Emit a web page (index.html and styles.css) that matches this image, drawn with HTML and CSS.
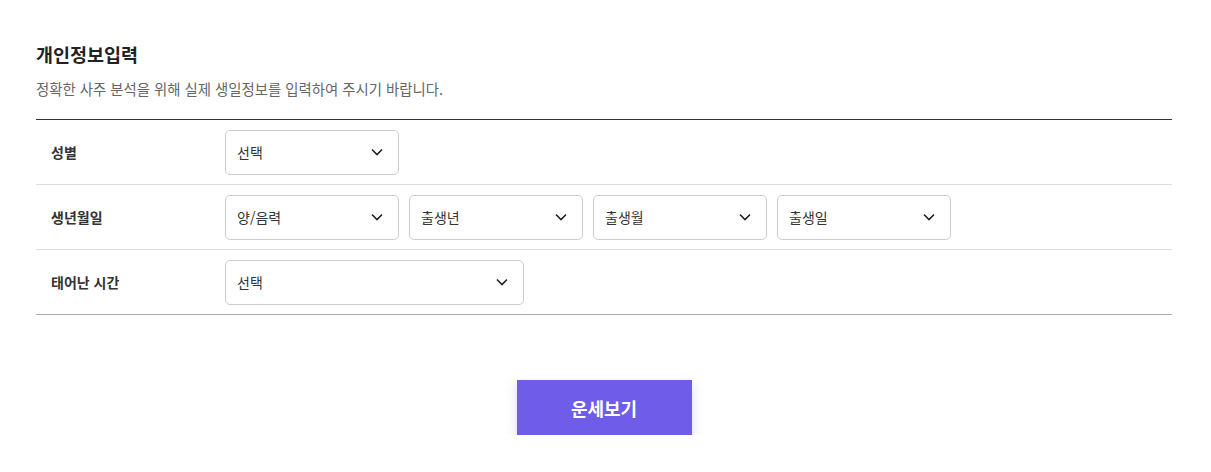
FILE: index.html
```html
<!DOCTYPE html>
<html lang="ko">
<head>
<meta charset="utf-8">
<link rel="stylesheet" href="styles.css">
</head>
<body>
<div class="wrap">
  <h2 class="title">개인정보입력</h2>
  <p class="desc">정확한 사주 분석을 위해 실제 생일정보를 입력하여 주시기 바랍니다.</p>
  <div class="form">
    <div class="row">
      <div class="label">성별</div>
      <div class="fields">
        <div class="select"><span>선택</span><svg class="chev" viewBox="0 0 12 8"><path d="M1 1.5l5 5 5-5" /></svg></div>
      </div>
    </div>
    <div class="row">
      <div class="label">생년월일</div>
      <div class="fields">
        <div class="select"><span>양/음력</span><svg class="chev" viewBox="0 0 12 8"><path d="M1 1.5l5 5 5-5" /></svg></div>
        <div class="select"><span>출생년</span><svg class="chev" viewBox="0 0 12 8"><path d="M1 1.5l5 5 5-5" /></svg></div>
        <div class="select"><span>출생월</span><svg class="chev" viewBox="0 0 12 8"><path d="M1 1.5l5 5 5-5" /></svg></div>
        <div class="select"><span>출생일</span><svg class="chev" viewBox="0 0 12 8"><path d="M1 1.5l5 5 5-5" /></svg></div>
      </div>
    </div>
    <div class="row last">
      <div class="label">태어난 시간</div>
      <div class="fields">
        <div class="select wide"><span>선택</span><svg class="chev" viewBox="0 0 12 8"><path d="M1 1.5l5 5 5-5" /></svg></div>
      </div>
    </div>
  </div>
  <div class="actions">
    <button class="btn">운세보기</button>
  </div>
</div>
</body>
</html>
```

FILE: styles.css
```css
* { box-sizing: border-box; }
html, body { margin: 0; padding: 0; background: #fff; }
body {
  font-family: "Noto Sans CJK KR", "Noto Sans", sans-serif;
  color: #222;
}
.wrap {
  width: 1136px;
  margin-left: 36px;
  padding-top: 41px;
}
.title {
  margin: 0;
  font-size: 18.5px;
  line-height: 26px;
  font-weight: 700;
  color: #222;
}
.desc {
  margin: 12px 0 0;
  font-size: 14.4px;
  line-height: 20px;
  color: #666;
}
.form {
  margin-top: 20px;
  border-top: 1px solid #333;
}
.row {
  display: flex;
  align-items: center;
  height: 65px;
  border-bottom: 1px solid #ddd;
}
.row.last { border-bottom-color: #aaa; }
.label {
  width: 189px;
  padding-left: 15px;
  font-size: 14px;
  font-weight: 700;
  color: #333;
}
.fields {
  display: flex;
  gap: 10px;
}
.select {
  width: 174px;
  height: 45px;
  border: 1px solid #ccc;
  border-radius: 5px;
  display: flex;
  align-items: center;
  justify-content: space-between;
  padding: 0 15px 0 11px;
  font-size: 14px;
  color: #333;
}
.select.wide { width: 299px; }
.chev {
  width: 12px;
  height: 8px;
  fill: none;
  stroke: #222;
  stroke-width: 1.6;
}
.actions {
  display: flex;
  justify-content: center;
  padding-top: 65px;
}
.btn {
  width: 175px;
  height: 55px;
  border: 0;
  background: #6f5ce9;
  color: #fff;
  font-family: "Noto Sans CJK KR", "Noto Sans", sans-serif;
  font-size: 18px;
  font-weight: 700;
  box-shadow: 0 4px 10px rgba(112, 92, 233, 0.25);
  cursor: pointer;
}
```
